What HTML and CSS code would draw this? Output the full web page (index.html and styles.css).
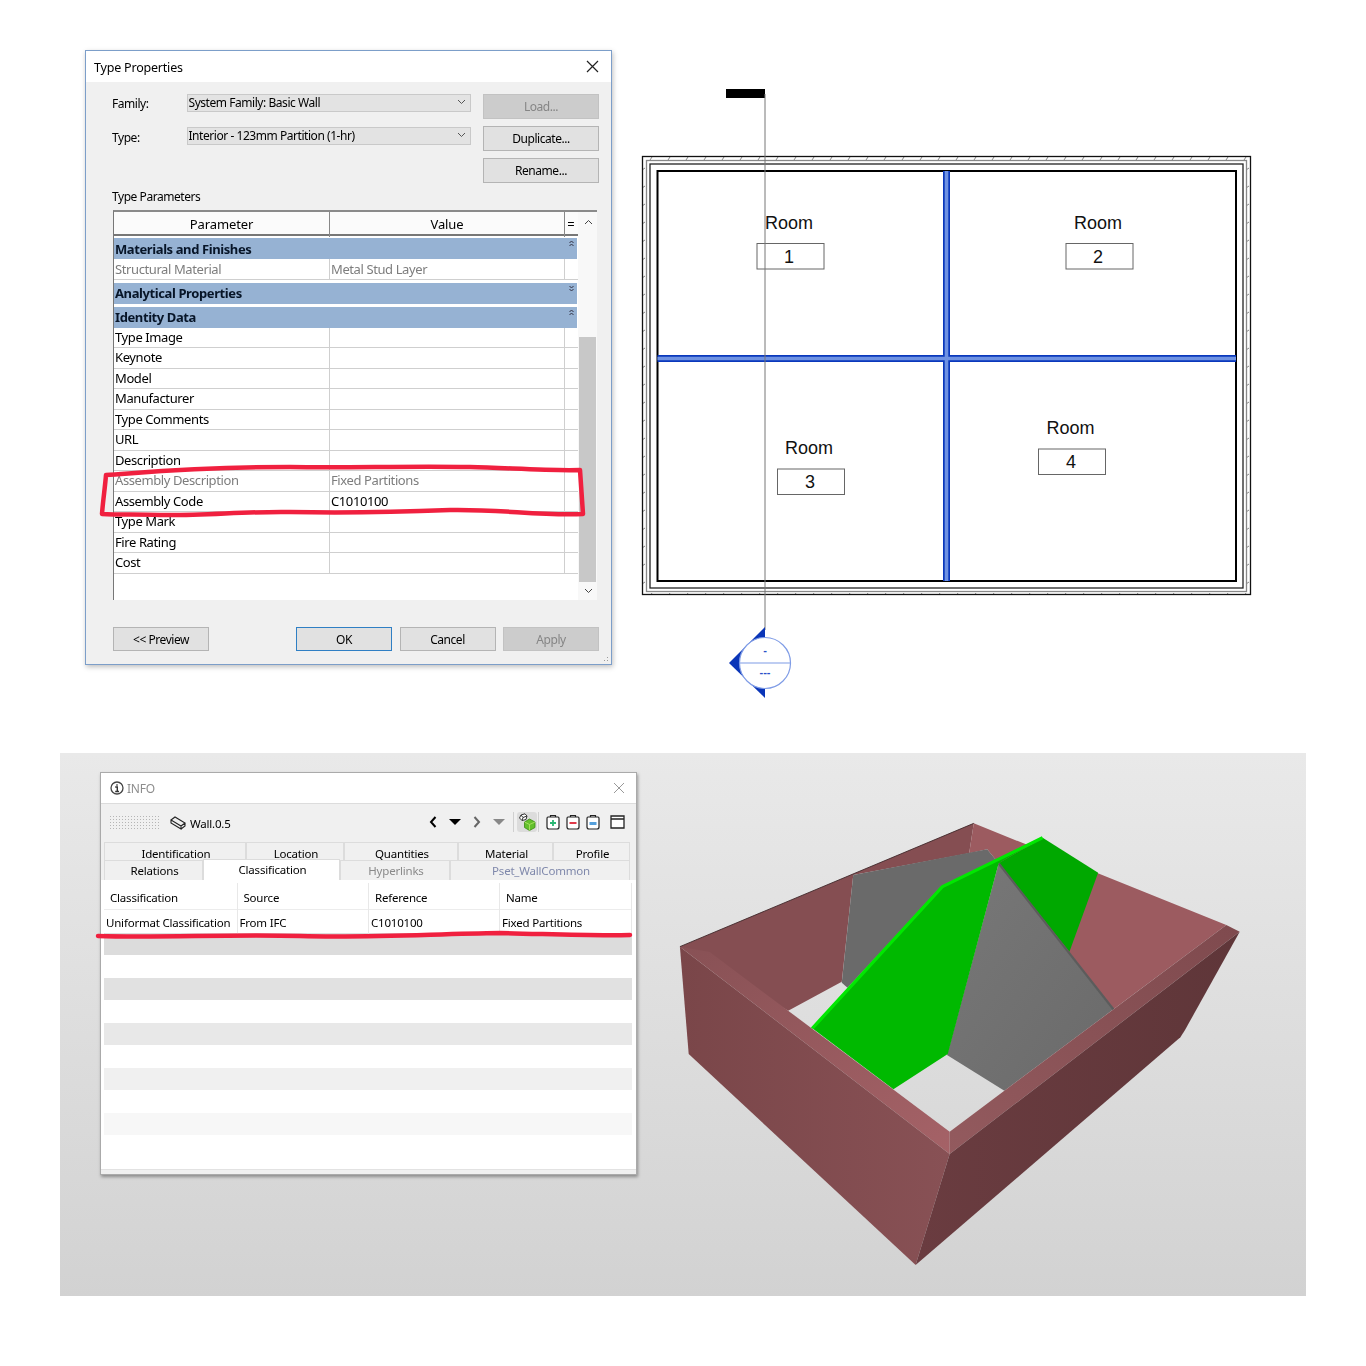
FILE: index.html
```html
<!DOCTYPE html>
<html>
    <head lang="en">
        <meta charset="UTF-8">
        <title>Type Properties</title>
        <link rel="stylesheet" href="styles.css">
    </head>
    <body>
        <div id="top">
            <div id="dialog">
                <div class="dlg-title">
                    <span>Type Properties</span>
                    <svg width="13" height="13" viewBox="0 0 13 13"><path d="M1 1L12 12M12 1L1 12" stroke="#222" stroke-width="1.2" fill="none"/></svg>
                </div>
                <div class="dlg-body">
                    <div class="form">
                        <div class="fields">
                            <div class="field">
                                <label>Family:</label>
                                <div class="select"><span>System Family: Basic Wall</span><svg width="9" height="6" viewBox="0 0 9 6"><path d="M1 1L4.5 4.5L8 1" stroke="#555" fill="none"/></svg></div>
                            </div>
                            <div class="field">
                                <label class="low">Type:</label>
                                <div class="select"><span>Interior - 123mm Partition (1-hr)</span><svg width="9" height="6" viewBox="0 0 9 6"><path d="M1 1L4.5 4.5L8 1" stroke="#555" fill="none"/></svg></div>
                            </div>
                        </div>
                        <div class="side-btns">
                            <div class="btn off">Load...</div>
                            <div class="btn">Duplicate...</div>
                            <div class="btn">Rename...</div>
                        </div>
                    </div>
                    <div class="caption">Type Parameters</div>
                    <div id="params">
                        <div class="grid">
                            <div class="head"><span>Parameter</span><span>Value</span><span>=</span></div>
                            <div class="group first">Materials and Finishes<svg width="5" height="7" viewBox="0 0 5 7"><path d="M.5 3L2.5 1L4.5 3M.5 6L2.5 4L4.5 6" stroke="#334" fill="none"/></svg></div>
                            <div class="row dim"><span>Structural Material</span><span>Metal Stud Layer</span><span></span></div>
                            <div class="group">Analytical Properties<svg width="5" height="7" viewBox="0 0 5 7"><path d="M.5 1L2.5 3L4.5 1M.5 4L2.5 6L4.5 4" stroke="#334" fill="none"/></svg></div>
                            <div class="group">Identity Data<svg width="5" height="7" viewBox="0 0 5 7"><path d="M.5 3L2.5 1L4.5 3M.5 6L2.5 4L4.5 6" stroke="#334" fill="none"/></svg></div>
                            <div class="row"><span>Type Image</span><span></span><span></span></div>
                            <div class="row"><span>Keynote</span><span></span><span></span></div>
                            <div class="row"><span>Model</span><span></span><span></span></div>
                            <div class="row"><span>Manufacturer</span><span></span><span></span></div>
                            <div class="row"><span>Type Comments</span><span></span><span></span></div>
                            <div class="row"><span>URL</span><span></span><span></span></div>
                            <div class="row"><span>Description</span><span></span><span></span></div>
                            <div class="row dim"><span>Assembly Description</span><span>Fixed Partitions</span><span></span></div>
                            <div class="row"><span>Assembly Code</span><span>C1010100</span><span></span></div>
                            <div class="row"><span>Type Mark</span><span></span><span></span></div>
                            <div class="row"><span>Fire Rating</span><span></span><span></span></div>
                            <div class="row"><span>Cost</span><span></span><span></span></div>
                        </div>
                        <div class="scroll">
                            <div class="scroll-top"><svg width="9" height="6" viewBox="0 0 9 6"><path d="M1 5L4.5 1.5L8 5" stroke="#444" fill="none"/></svg></div>
                            <div class="thumb"></div>
                            <div class="scroll-end"><svg width="9" height="6" viewBox="0 0 9 6"><path d="M1 1L4.5 4.5L8 1" stroke="#444" fill="none"/></svg></div>
                        </div>
                    </div>
                    <div class="foot">
                        <div class="btn">&lt;&lt; Preview</div>
                        <div class="foot-right">
                            <div class="btn ok">OK</div>
                            <div class="btn">Cancel</div>
                            <div class="btn off">Apply</div>
                        </div>
                    </div>
                </div>
                <div class="grip"></div>
                <svg class="mark" viewBox="86 51 525 613"><path d="M106 475C150 472 200 467 290 467C350 468 400 466 470 467C510 468 550 471 580 470C581 485 582 500 583 514C540 516 500 509 450 510C400 512 340 513 290 512C250 511 200 516 160 515C140 514 120 515 102 514C103 500 105 488 106 475Z"/></svg>
            </div>

            <svg id="plan" viewBox="640 80 620 630">
                <defs>
                    <pattern id="hatchx" width="18" height="4" patternUnits="userSpaceOnUse" x="648" y="156"><path d="M2 4L4 1" stroke="#666" stroke-width=".8"/></pattern>
                    <pattern id="hatchy" width="4" height="18" patternUnits="userSpaceOnUse" x="642" y="166"><path d="M0 4L3 2" stroke="#666" stroke-width=".8"/></pattern>
                </defs>
                <rect x="643" y="157" width="607" height="4" fill="url(#hatchx)"/>
                <rect x="643" y="591" width="607" height="4" fill="url(#hatchx)"/>
                <rect x="643" y="157" width="4" height="437" fill="url(#hatchy)"/>
                <rect x="1247" y="157" width="4" height="437" fill="url(#hatchy)"/>
                <rect x="642.5" y="156.5" width="608" height="438" class="wall"/>
                <rect x="646.5" y="160.5" width="600" height="431" class="wall grey"/>
                <rect x="650" y="164" width="593" height="424" class="wall mid"/>
                <rect x="657.5" y="171" width="578.5" height="410" class="wall thick"/>
                <path d="M946.5 171V581" class="blue-edge"/>
                <path d="M657.5 358.5H1236" class="blue-edge"/>
                <path d="M946.5 171V581" class="blue-in"/>
                <path d="M657.5 358.5H1236" class="blue-in"/>

                <text x="789" y="229" class="label">Room</text>
                <rect x="757" y="243.500" width="67" height="25.500" class="tag"/>
                <text x="789" y="262.500" class="label">1</text>
                <text x="1098" y="229" class="label">Room</text>
                <rect x="1066" y="243.500" width="67" height="25.500" class="tag"/>
                <text x="1098" y="262.500" class="label">2</text>
                <text x="809" y="454" class="label">Room</text>
                <rect x="777.500" y="469" width="67" height="25.500" class="tag"/>
                <text x="810" y="488" class="label">3</text>
                <text x="1070.500" y="434" class="label">Room</text>
                <rect x="1038.500" y="449" width="67" height="25.500" class="tag"/>
                <text x="1071" y="468" class="label">4</text>

                <rect x="726" y="89" width="39" height="9" fill="#000"/>
                <path d="M765 94V630" stroke="#777" stroke-width="1" fill="none"/>
                <path d="M765 627L729 663L765 698Z" fill="#0a35b8"/>
                <circle cx="765" cy="663" r="25.500" fill="#fff" stroke="#7f9ce6" stroke-width="1.200"/>
                <path d="M739.500 663H790.500" stroke="#7f9ce6" stroke-width="1.200"/>
                <text x="765" y="654" class="sec">-</text>
                <text x="765" y="676" class="sec">---</text>
            </svg>
        </div>

        <div id="bottom">
            <div id="info">
                <div class="info-title">
                    <svg width="14" height="14" viewBox="0 0 14 14"><circle cx="7" cy="7" r="6" fill="none" stroke="#444" stroke-width="1.300"/><path d="M5.200 6H7.300V10.500M5.200 10.500H9M7 3.200V4.800" stroke="#333" stroke-width="1.400" fill="none"/></svg>
                    <span>INFO</span>
                    <svg class="info-x" width="12" height="12" viewBox="0 0 12 12"><path d="M1 1L11 11M11 1L1 11" stroke="#999" fill="none"/></svg>
                </div>
                <div class="tools">
                    <div class="dots"></div>
                    <svg width="16" height="14" viewBox="0 0 16 14"><path d="M1 4L5 1L15 7L11 10ZM1 4V7L11 13V10M15 7V10L11 13" fill="none" stroke="#222" stroke-width="1.100"/></svg>
                    <span class="wall-name">Wall.0.5</span>
                    <div class="tool-icons">
                        <svg width="8" height="12" viewBox="0 0 8 12"><path d="M6.500 1L2 6L6.500 11" stroke="#000" stroke-width="2" fill="none"/></svg>
                        <svg class="gap" width="12" height="6" viewBox="0 0 12 6"><path d="M0 0H12L6 6Z" fill="#000"/></svg>
                        <svg class="gap" width="8" height="12" viewBox="0 0 8 12"><path d="M1.500 1L6 6L1.500 11" stroke="#666" stroke-width="2" fill="none"/></svg>
                        <svg class="gap" width="12" height="6" viewBox="0 0 12 6"><path d="M0 0H12L6 6Z" fill="#888"/></svg>
                        <i class="sep"></i>
                        <div class="active-tool"><svg width="18" height="18" viewBox="0 0 18 18"><path d="M3 2L7 .8L9 3L8 6.500L4 7.500L1.500 5Z" fill="#fff" stroke="#333"/><path d="M3 2L5 4.500L4 7.500M5 4.500L9 3" stroke="#333" fill="none"/><path d="M11.500 6L17 9V14.500L11.500 17.500L6.500 14.500V9Z" fill="#63c02c" stroke="#3b8a14" stroke-width=".8"/><path d="M6.500 9L11.500 11.500L17 9M11.500 11.500V17.500" stroke="#b5e66b" stroke-width=".8" fill="none"/></svg></div>
                        <i class="sep"></i>
                        <svg class="bag" width="14" height="16" viewBox="0 0 14 16"><path d="M4.500 3V1.500H9.500V3M2 3H12Q13 3 13 4.500V13Q13 15 11 15H3Q1 15 1 13V4.500Q1 3 2 3Z" fill="#fff" stroke="#222" stroke-width="1.200"/><path d="M7 6V12M4 9H10" stroke="#2ab673" stroke-width="1.800"/></svg>
                        <svg class="bag" width="14" height="16" viewBox="0 0 14 16"><path d="M4.500 3V1.500H9.500V3M2 3H12Q13 3 13 4.500V13Q13 15 11 15H3Q1 15 1 13V4.500Q1 3 2 3Z" fill="#fff" stroke="#222" stroke-width="1.200"/><path d="M3.500 9H10.500" stroke="#e03a4a" stroke-width="2"/></svg>
                        <svg class="bag" width="14" height="16" viewBox="0 0 14 16"><path d="M4.500 3V1.500H9.500V3M2 3H12Q13 3 13 4.500V13Q13 15 11 15H3Q1 15 1 13V4.500Q1 3 2 3Z" fill="#fff" stroke="#222" stroke-width="1.200"/><path d="M3.500 8H10.500V11H3.500Z" fill="#55a0dc"/></svg>
                        <svg class="win" width="15" height="14" viewBox="0 0 15 14"><path d="M1 1H14V13H1ZM1 4H14" fill="#fff" stroke="#222" stroke-width="1.300"/></svg>
                    </div>
                </div>
                <div class="tabs t1">
                    <div style="width:142px">Identification</div>
                    <div style="width:98px">Location</div>
                    <div style="width:114px">Quantities</div>
                    <div style="width:95px">Material</div>
                    <div style="width:77px">Profile</div>
                </div>
                <div class="tabs t2">
                    <div style="width:99px">Relations</div>
                    <div class="on" style="width:137px">Classification</div>
                    <div class="faint" style="width:110px">Hyperlinks</div>
                    <div class="faint blue" style="width:180px">Pset_WallCommon</div>
                </div>
                <div class="sheet">
                    <div class="sheet-head"><span>Classification</span><span>Source</span><span>Reference</span><span>Name</span></div>
                    <div class="sheet-row"><span>Uniformat Classification</span><span>From IFC</span><span>C1010100</span><span>Fixed Partitions</span></div>
                    <div class="stripes">
                        <div></div><div></div><div></div><div></div><div></div>
                        <div></div><div></div><div></div><div></div><div></div>
                    </div>
                </div>
                <svg class="mark" viewBox="101 773 535 401"><path d="M98 936C160 938 230 934 300 936C370 938 430 934 500 933C550 934 590 936 630 935"/></svg>
            </div>

            <svg id="model" viewBox="0 0 1568 1440" preserveAspectRatio="none">
                <defs>
                    <linearGradient id="wl" x1="0" y1="0" x2="1" y2="0"><stop offset="0" stop-color="#7a4649"/><stop offset="1" stop-color="#885155"/></linearGradient>
                    <linearGradient id="wr" x1="0" y1="0" x2="1" y2="0"><stop offset="0" stop-color="#6a3c40"/><stop offset="1" stop-color="#5f3639"/></linearGradient>
                    <linearGradient id="rl" x1="0" y1="0" x2="1" y2="1"><stop offset="0" stop-color="#885155"/><stop offset="1" stop-color="#a56267"/></linearGradient>
                    <linearGradient id="rr" x1="0" y1="1" x2="1" y2="0"><stop offset="0" stop-color="#935a5e"/><stop offset="1" stop-color="#7f4a4e"/></linearGradient>
                    <linearGradient id="gr" x1="0" y1="0" x2="1" y2="1"><stop offset="0" stop-color="#787878"/><stop offset="1" stop-color="#6a6a6a"/></linearGradient>
                </defs>
                <polygon points="52,440 820,70 808,160 505,225 475,545 335,632" fill="#854e52"/>
                <polygon points="820,70 1480,375 1185,628 885,190 855,148 808,160" fill="#9c5b60"/>
                <polygon points="505,225 855,148 885,190 738,258 490,563 475,548" fill="#6a6a6a"/>
                <polygon points="885,190 1000,113 1145,218 1070,455" fill="#00a800"/>
                <polygon points="885,190 1185,628 900,872 750,765" fill="url(#gr)"/>
                <path d="M885 190L1185 628" stroke="#5c5c5c" stroke-width="6" fill="none"/>
                <polygon points="398,685 738,258 1000,113 885,190 752,762 610,868" fill="#00b900"/>
                <path d="M398 685L738 260L1000 113" stroke="#00e800" stroke-width="9" fill="none"/>
                <polygon points="52,440 130,456 757,995 757,1062" fill="url(#rl)"/>
                <polygon points="757,995 1480,375 1515,395 757,1062" fill="url(#rr)"/>
                <polygon points="52,440 757,1062 668,1395 75,762" fill="url(#wl)"/>
                <polygon points="757,1062 1515,395 1372,690 1360,712 668,1395" fill="url(#wr)"/>
                <path d="M52 440L820 70" stroke="#40282a" stroke-width="2.500" fill="none"/>
            </svg>
        </div>
    </body>
</html>
```

FILE: styles.css
```css
* {
    margin: 0;
    padding: 0;
    box-sizing: border-box;
}
body {
    background: #fff;
    font-family: "Noto Sans", "Open Sans", sans-serif;
    color: #000;
}
svg {
    display: block;
}

/* top half */
#top {
    display: flex;
    align-items: flex-start;
    height: 753px;
    padding: 50px 0 0 85px;
}
#dialog {
    position: relative;
    width: 527px;
    height: 615px;
    border: 1px solid #7c9ec9;
    background: #f0f0f0;
    box-shadow: 1px 2px 5px rgba(0, 0, 0, .25);
    filter: blur(.2px);
}
.dlg-title {
    display: flex;
    align-items: center;
    justify-content: space-between;
    height: 31px;
    padding: 0 12px 0 8px;
    background: #fff;
    font-size: 12.5px;
    letter-spacing: -.2px;
}
.dlg-title span {
    padding-top: 2px;
}
.dlg-body {
    padding: 12px 12px 0 26px;
    font-size: 12px;
    letter-spacing: -.45px;
}
.form {
    display: flex;
    justify-content: space-between;
}
.fields {
    display: flex;
    flex-direction: column;
    gap: 15px;
}
.field {
    display: flex;
    align-items: center;
    height: 18px;
}
.field label {
    width: 74.5px;
    padding-top: 1px;
}
.field .low {
    padding-top: 3px;
}
.select {
    display: flex;
    align-items: center;
    justify-content: space-between;
    width: 284px;
    height: 18px;
    padding: 0 4px 2px 1px;
    background: #e3e3e3;
    border: 1px solid #c9c9c9;
}
.side-btns {
    display: flex;
    flex-direction: column;
    gap: 7px;
    width: 116px;
}
.side-btns .btn {
    width: 116px;
    height: 25px;
}
.btn {
    display: flex;
    align-items: center;
    justify-content: center;
    width: 96px;
    height: 24px;
    background: #e1e1e1;
    border: 1px solid #b4b4b4;
}
.btn.off {
    background: #cccccc;
    border-color: #c2c2c2;
    color: #858585;
}
.btn.ok {
    border-color: #2f7fc4;
}
.caption {
    height: 16px;
    line-height: 16px;
    margin-top: 6px;
}

#params {
    display: flex;
    width: 484px;
    height: 390px;
    margin-top: 5px;
    margin-left: 1px;
    background: #fff;
    border-top: 2px solid #8a8a8a;
    border-left: 1px solid #777;
    font-size: 13px;
    letter-spacing: -.4px;
}
.grid {
    width: 464px;
}
.head {
    display: grid;
    grid-template-columns: 215px 235px 13px;
    height: 24px;
    background: #fbfbfb;
    border-bottom: 2px solid #777;
    text-align: center;
    line-height: 25px;
    letter-spacing: -.1px;
}
.head span + span {
    border-left: 1px solid #888;
}
.group {
    display: flex;
    justify-content: space-between;
    height: 21px;
    margin: 3px 1px 0 0;
    padding: 0 3px 0 1px;
    background: #96b2d3;
    font-weight: 700;
    line-height: 20px;
    color: #071528;
}
.group.first {
    margin-top: 2px;
    line-height: 22px;
}
.group.first + .row {
    line-height: 21px;
}
.group svg {
    margin-top: 2px;
}
.row {
    display: grid;
    grid-template-columns: 215px 235px 13px;
    height: 20.5px;
    border-bottom: 1px solid #cfcfcf;
    line-height: 19px;
}
.row span {
    padding-left: 1px;
    white-space: nowrap;
}
.row span + span {
    border-left: 1px solid #cfcfcf;
}
.row.dim {
    color: #7d7d7d;
}
.scroll {
    display: flex;
    flex-direction: column;
    flex: none;
    width: 19px;
    background: #f8f8f8;
}
.scroll-top {
    flex: none;
    height: 125px;
    padding: 7px 0 0 6px;
}
.thumb {
    flex: none;
    width: 17px;
    height: 245px;
    margin-left: 1px;
    background: #c8c8c8;
}
.scroll-end {
    flex: none;
    padding: 6px 0 0 6px;
}
.foot {
    display: flex;
    justify-content: space-between;
    margin: 27px 0 0 1px;
}
.foot-right {
    display: flex;
    gap: 7.5px;
}
.grip {
    position: absolute;
    right: 1px;
    bottom: 1px;
    width: 10px;
    height: 10px;
    background: radial-gradient(circle, #9a9a9a 1px, transparent 1px) 0 0 / 3px 3px;
    clip-path: polygon(100% 0, 100% 100%, 0 100%);
}
.mark {
    position: absolute;
    left: 0;
    top: 0;
    width: 100%;
    height: 100%;
    overflow: visible;
    pointer-events: none;
}
.mark path {
    fill: none;
    stroke: #f0203f;
    stroke-width: 4.5;
    stroke-linejoin: round;
    stroke-linecap: round;
}

#plan {
    width: 620px;
    height: 630px;
    margin: 30px 0 0 28px;
}
.wall {
    fill: none;
    stroke: #111;
    stroke-width: 1.3;
}
.wall.grey {
    stroke: #888;
}
.wall.mid {
    stroke: #222;
}
.wall.thick {
    stroke: #000;
    stroke-width: 2;
}
.blue-edge {
    stroke: #0a38bc;
    stroke-width: 7;
    fill: none;
}
.blue-in {
    stroke: #6f92e2;
    stroke-width: 3.6;
    fill: none;
}
.tag {
    fill: #fff;
    fill-opacity: 0;
    stroke: #666;
    stroke-width: 1;
}
.label {
    font-family: "Liberation Sans", sans-serif;
    font-size: 18px;
    text-anchor: middle;
    fill: #111;
}
.sec {
    font-family: "Liberation Sans", sans-serif;
    font-size: 11px;
    font-weight: 700;
    text-anchor: middle;
    fill: #2a50c8;
}

/* bottom half */
#bottom {
    display: flex;
    align-items: flex-start;
    width: 1246px;
    height: 543px;
    margin-left: 60px;
    padding: 19px 0 0 40px;
    background: linear-gradient(#e9e9e9, #d2d2d2);
}
#info {
    position: relative;
    flex: none;
    width: 537px;
    height: 403px;
    background: #f0f0f0;
    border: 1px solid #aaa;
    box-shadow: 1px 2px 3px rgba(0, 0, 0, .35);
    font-size: 11.5px;
    letter-spacing: -.2px;
    filter: blur(.2px);
}
.info-title {
    display: flex;
    align-items: center;
    gap: 3px;
    height: 31px;
    padding: 0 11px 0 9px;
    background: #fff;
    border-bottom: 1px solid #dcdcdc;
    color: #8d8d8d;
    font-size: 12px;
}
.info-x {
    margin-left: auto;
}
.tools {
    display: flex;
    align-items: center;
    height: 38px;
    padding-left: 8px;
}
.dots {
    width: 50px;
    height: 16px;
    background: radial-gradient(circle, #b5b5b5 .8px, transparent 1px) 0 0 / 3px 3px;
}
.tools > svg {
    margin-left: 11px;
}
.wall-name {
    margin-left: 4px;
}
.tool-icons {
    display: flex;
    align-items: center;
    margin: -2px 0 0 auto;
    padding-right: 11px;
}
.gap {
    margin-left: 12px;
}
.sep {
    width: 1px;
    height: 20px;
    margin: 0 3px 0 8px;
    background: #d0d0d0;
}
.active-tool {
    display: flex;
    align-items: center;
    justify-content: center;
    width: 20px;
    height: 20px;
    background: #dcdcdc;
    border-radius: 3px;
}
.active-tool + .sep {
    margin: 0 7px 0 1px;
}
.bag {
    margin-right: 6px;
}
.win {
    margin-left: 4px;
}
.tabs {
    display: flex;
    padding-left: 3px;
}
.tabs div {
    padding-left: 2px;
    text-align: center;
    border: 1px solid #dcdcdc;
    border-bottom: 0;
    background: #f0f0f0;
}
.t1 {
    height: 18px;
    line-height: 21px;
    overflow: hidden;
}
.t2 {
    height: 20px;
    line-height: 20px;
}
.t2 .on {
    height: 21px;
    margin-top: -1px;
    background: #fff;
    position: relative;
    line-height: 19px;
}
.t2 .faint {
    color: #8a8a8a;
}
.t2 .blue {
    color: #7f88ab;
}
.sheet {
    height: 290px;
    padding-left: 3px;
    background: #fff;
    border-bottom: 1px solid #e2e2e2;
}
.sheet-head,
.sheet-row {
    display: grid;
    grid-template-columns: 133.5px 131.5px 131px 132px;
    width: 528px;
}
.sheet-head {
    height: 29px;
    padding-top: 3px;
    line-height: 29px;
}
.sheet-head span {
    padding-left: 6px;
    border-right: 1px solid #e8e8e8;
}
.sheet-row {
    height: 25px;
    line-height: 25px;
    border-top: 1px solid #ececec;
}
.sheet-row span {
    padding-left: 2px;
    border-right: 1px solid #e8e8e8;
    white-space: nowrap;
}
.stripes {
    width: 528px;
    margin-top: -1.5px;
}
.stripes div {
    height: 22.5px;
    background: #fff;
}
.stripes div:nth-child(1) {
    background: #dcdcdc;
}
.stripes div:nth-child(3) {
    background: #e1e1e1;
}
.stripes div:nth-child(5) {
    background: #e8e8e8;
}
.stripes div:nth-child(7) {
    background: #f0f0f0;
}
.stripes div:nth-child(9) {
    background: #f7f7f7;
}
#model {
    flex: none;
    width: 600px;
    height: 480px;
    margin: 28px 0 0 23px;
}
```
